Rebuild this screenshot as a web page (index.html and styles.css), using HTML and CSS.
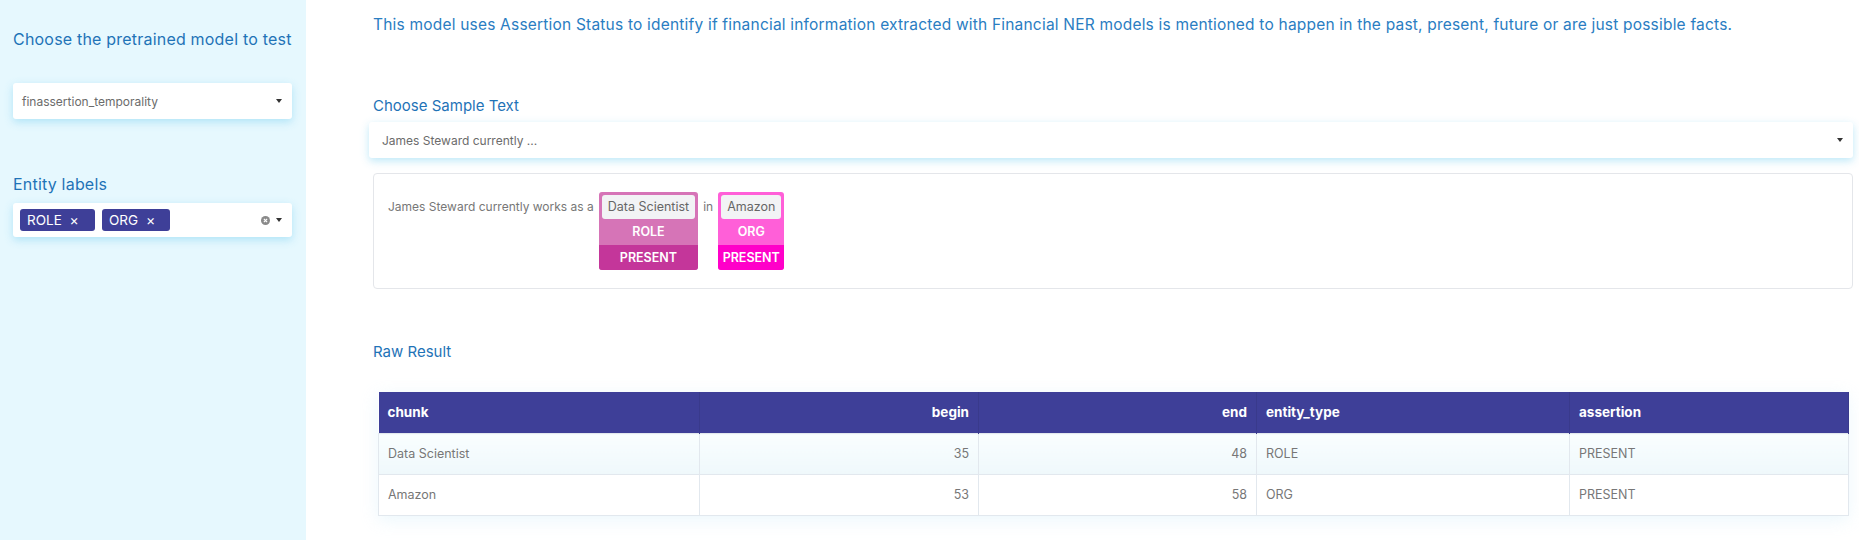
FILE: index.html
```html
<!DOCTYPE html>
<html lang="en">
<head>
    <meta charset="UTF-8">
    <title>Financial Assertion Status</title>
    <link rel="stylesheet" href="styles.css">
</head>
<body>
    <div class="page">
        <aside class="sidebar">
            <label class="side-label">Choose the pretrained model to test</label>
            <div class="select-box model-select">
                <span class="select-value">finassertion_temporality</span>
                <span class="caret"></span>
            </div>

            <label class="side-label labels-title">Entity labels</label>
            <div class="select-box multi-select">
                <div class="tags">
                    <span class="tag">ROLE <span class="tag-x">&times;</span></span>
                    <span class="tag">ORG <span class="tag-x">&times;</span></span>
                </div>
                <div class="controls">
                    <svg class="clear-icon" width="9" height="9" viewBox="0 0 10 10">
                        <circle cx="5" cy="5" r="5" fill="#8a8a8a"/>
                        <path d="M3.2 3.2 L6.8 6.8 M6.8 3.2 L3.2 6.8" stroke="#fff" stroke-width="1.3"/>
                    </svg>
                    <span class="caret"></span>
                </div>
            </div>
        </aside>

        <main class="content">
            <p class="description">This model uses Assertion Status to identify if financial information extracted with Financial NER models is mentioned to happen in the past, present, future or are just possible facts.</p>

            <h3 class="section-title sample-title">Choose Sample Text</h3>
            <div class="select-box sample-select">
                <span class="select-value">James Steward currently ...</span>
                <span class="caret"></span>
            </div>

            <div class="result-box">
                <span class="plain">James Steward currently works as a</span>
                <div class="entity role">
                    <span class="entity-text">Data Scientist</span>
                    <span class="entity-label">ROLE</span>
                    <span class="entity-status">PRESENT</span>
                </div>
                <span class="plain">in</span>
                <div class="entity org">
                    <span class="entity-text">Amazon</span>
                    <span class="entity-label">ORG</span>
                    <span class="entity-status">PRESENT</span>
                </div>
            </div>

            <h3 class="section-title raw-title">Raw Result</h3>
            <div class="table-wrap">
                <table class="raw-table">
                    <colgroup>
                        <col style="width: 321px">
                        <col style="width: 279px">
                        <col style="width: 278px">
                        <col style="width: 313px">
                        <col style="width: 279px">
                    </colgroup>
                    <thead>
                        <tr>
                            <th>chunk</th>
                            <th class="num">begin</th>
                            <th class="num">end</th>
                            <th>entity_type</th>
                            <th>assertion</th>
                        </tr>
                    </thead>
                    <tbody>
                        <tr>
                            <td>Data Scientist</td>
                            <td class="num">35</td>
                            <td class="num">48</td>
                            <td>ROLE</td>
                            <td>PRESENT</td>
                        </tr>
                        <tr>
                            <td>Amazon</td>
                            <td class="num">53</td>
                            <td class="num">58</td>
                            <td>ORG</td>
                            <td>PRESENT</td>
                        </tr>
                    </tbody>
                </table>
            </div>
        </main>
    </div>
</body>
</html>
```

FILE: styles.css
```css
body {
    margin: 0;
    font-family: Inter, "Noto Sans", sans-serif;
    background-color: #fff;
}
.page {
    display: flex;
    min-height: 540px;
}

/* Barra lateral */
.sidebar {
    width: 306px;
    flex: 0 0 306px;
    background-color: #e6f8fe;
    padding: 29px 14px 0 13px;
    box-sizing: border-box;
    display: flex;
    flex-direction: column;
}
.side-label {
    display: block;
    color: #1f73b7;
    font-size: 16px;
    line-height: 20px;
    letter-spacing: 0.2px;
}
.labels-title {
    margin-top: 55px;
}
.select-box {
    background-color: #fff;
    border-radius: 3px;
    box-shadow: 0 3px 8px rgba(110, 205, 240, 0.45);
    display: flex;
    align-items: center;
    justify-content: space-between;
    box-sizing: border-box;
}
.model-select {
    margin-top: 34px;
    height: 36px;
    padding: 0 10px 0 9px;
}
.select-value {
    color: #6b6b6b;
    font-size: 12px;
}
.caret {
    width: 0;
    height: 0;
    border-left: 3.5px solid transparent;
    border-right: 3.5px solid transparent;
    border-top: 4px solid #333;
}
.multi-select {
    margin-top: 9px;
    height: 34px;
    padding: 0 10px 0 7px;
}
.tags {
    display: flex;
    gap: 7px;
}
.tag {
    background-color: #3e3f98;
    color: #fff;
    font-size: 13.5px;
    border-radius: 3px;
    height: 22px;
    line-height: 22px;
    padding: 0 7px 0 7px;
    box-sizing: border-box;
}
.tags .tag:first-child {
    width: 75px;
}
.tags .tag:last-child {
    width: 68px;
}
.tag-x {
    margin-left: 4px;
    font-size: 14px;
}
.controls {
    display: flex;
    align-items: center;
    gap: 6px;
}

/* Conteudo principal */
.content {
    flex: 1;
    padding: 15px 6px 0 67px;
    min-width: 0;
}
.description {
    margin: 0;
    color: #2a7dc2;
    font-size: 15.5px;
    line-height: 20px;
    letter-spacing: 0.2px;
}
.section-title {
    margin: 0;
    font-weight: normal;
    color: #1f73b7;
    font-size: 15px;
    line-height: 20px;
}
.sample-title {
    margin-top: 61px;
}
.sample-select {
    margin-top: 6px;
    margin-left: -4px;
    height: 36px;
    padding: 0 10px 0 13px;
}
.result-box {
    margin-top: 15px;
    height: 116px;
    box-sizing: border-box;
    border: 1px solid #e4e6ea;
    border-radius: 4px;
    padding: 18px 14px;
    display: flex;
    align-items: flex-start;
    gap: 5px;
}
.plain {
    color: #777;
    font-size: 12px;
    line-height: 24px;
    margin-top: 3px;
}
.entity {
    display: flex;
    flex-direction: column;
    border-radius: 3px;
    padding-top: 3px;
    text-align: center;
    overflow: hidden;
}
.entity-text {
    background-color: #f2f3f5;
    color: #666;
    font-size: 12.5px;
    line-height: 24px;
    border-radius: 3px;
    margin: 0 3px;
    padding: 0 6px;
}
.entity-label, .entity-status {
    color: #fff;
    font-weight: 600;
    font-size: 12.5px;
    line-height: 26px;
}
.entity-status {
    line-height: 25px;
}
.role {
    background-color: #d674b7;
}
.role .entity-status {
    background-color: #c4369a;
}
.org {
    background-color: #ff5fd8;
}
.org .entity-status {
    background-color: #ff00c9;
}

.raw-title {
    margin-top: 53px;
}
.table-wrap {
    margin: 30px 0 0 5px;
    width: 1470px;
    box-shadow: 0 4px 16px rgba(190, 230, 245, 0.3);
}
.raw-table {
    width: 100%;
    border-collapse: collapse;
    table-layout: fixed;
}
.raw-table tr {
    height: 41px;
}
.raw-table th {
    background-color: #3e3f98;
    color: #fff;
    font-weight: 700;
    font-size: 13.5px;
    line-height: 17px;
    padding: 12px 9px;
    text-align: left;
    border-right: 1px solid #393a8c;
}
.raw-table td {
    color: #777;
    font-size: 12.5px;
    line-height: 16px;
    padding: 12px 9px;
    border: 1px solid #e2e8ee;
}
.raw-table tbody tr:first-child td {
    background: linear-gradient(#f9feff, #eff8fb);
}
.raw-table .num {
    text-align: right;
}
```
